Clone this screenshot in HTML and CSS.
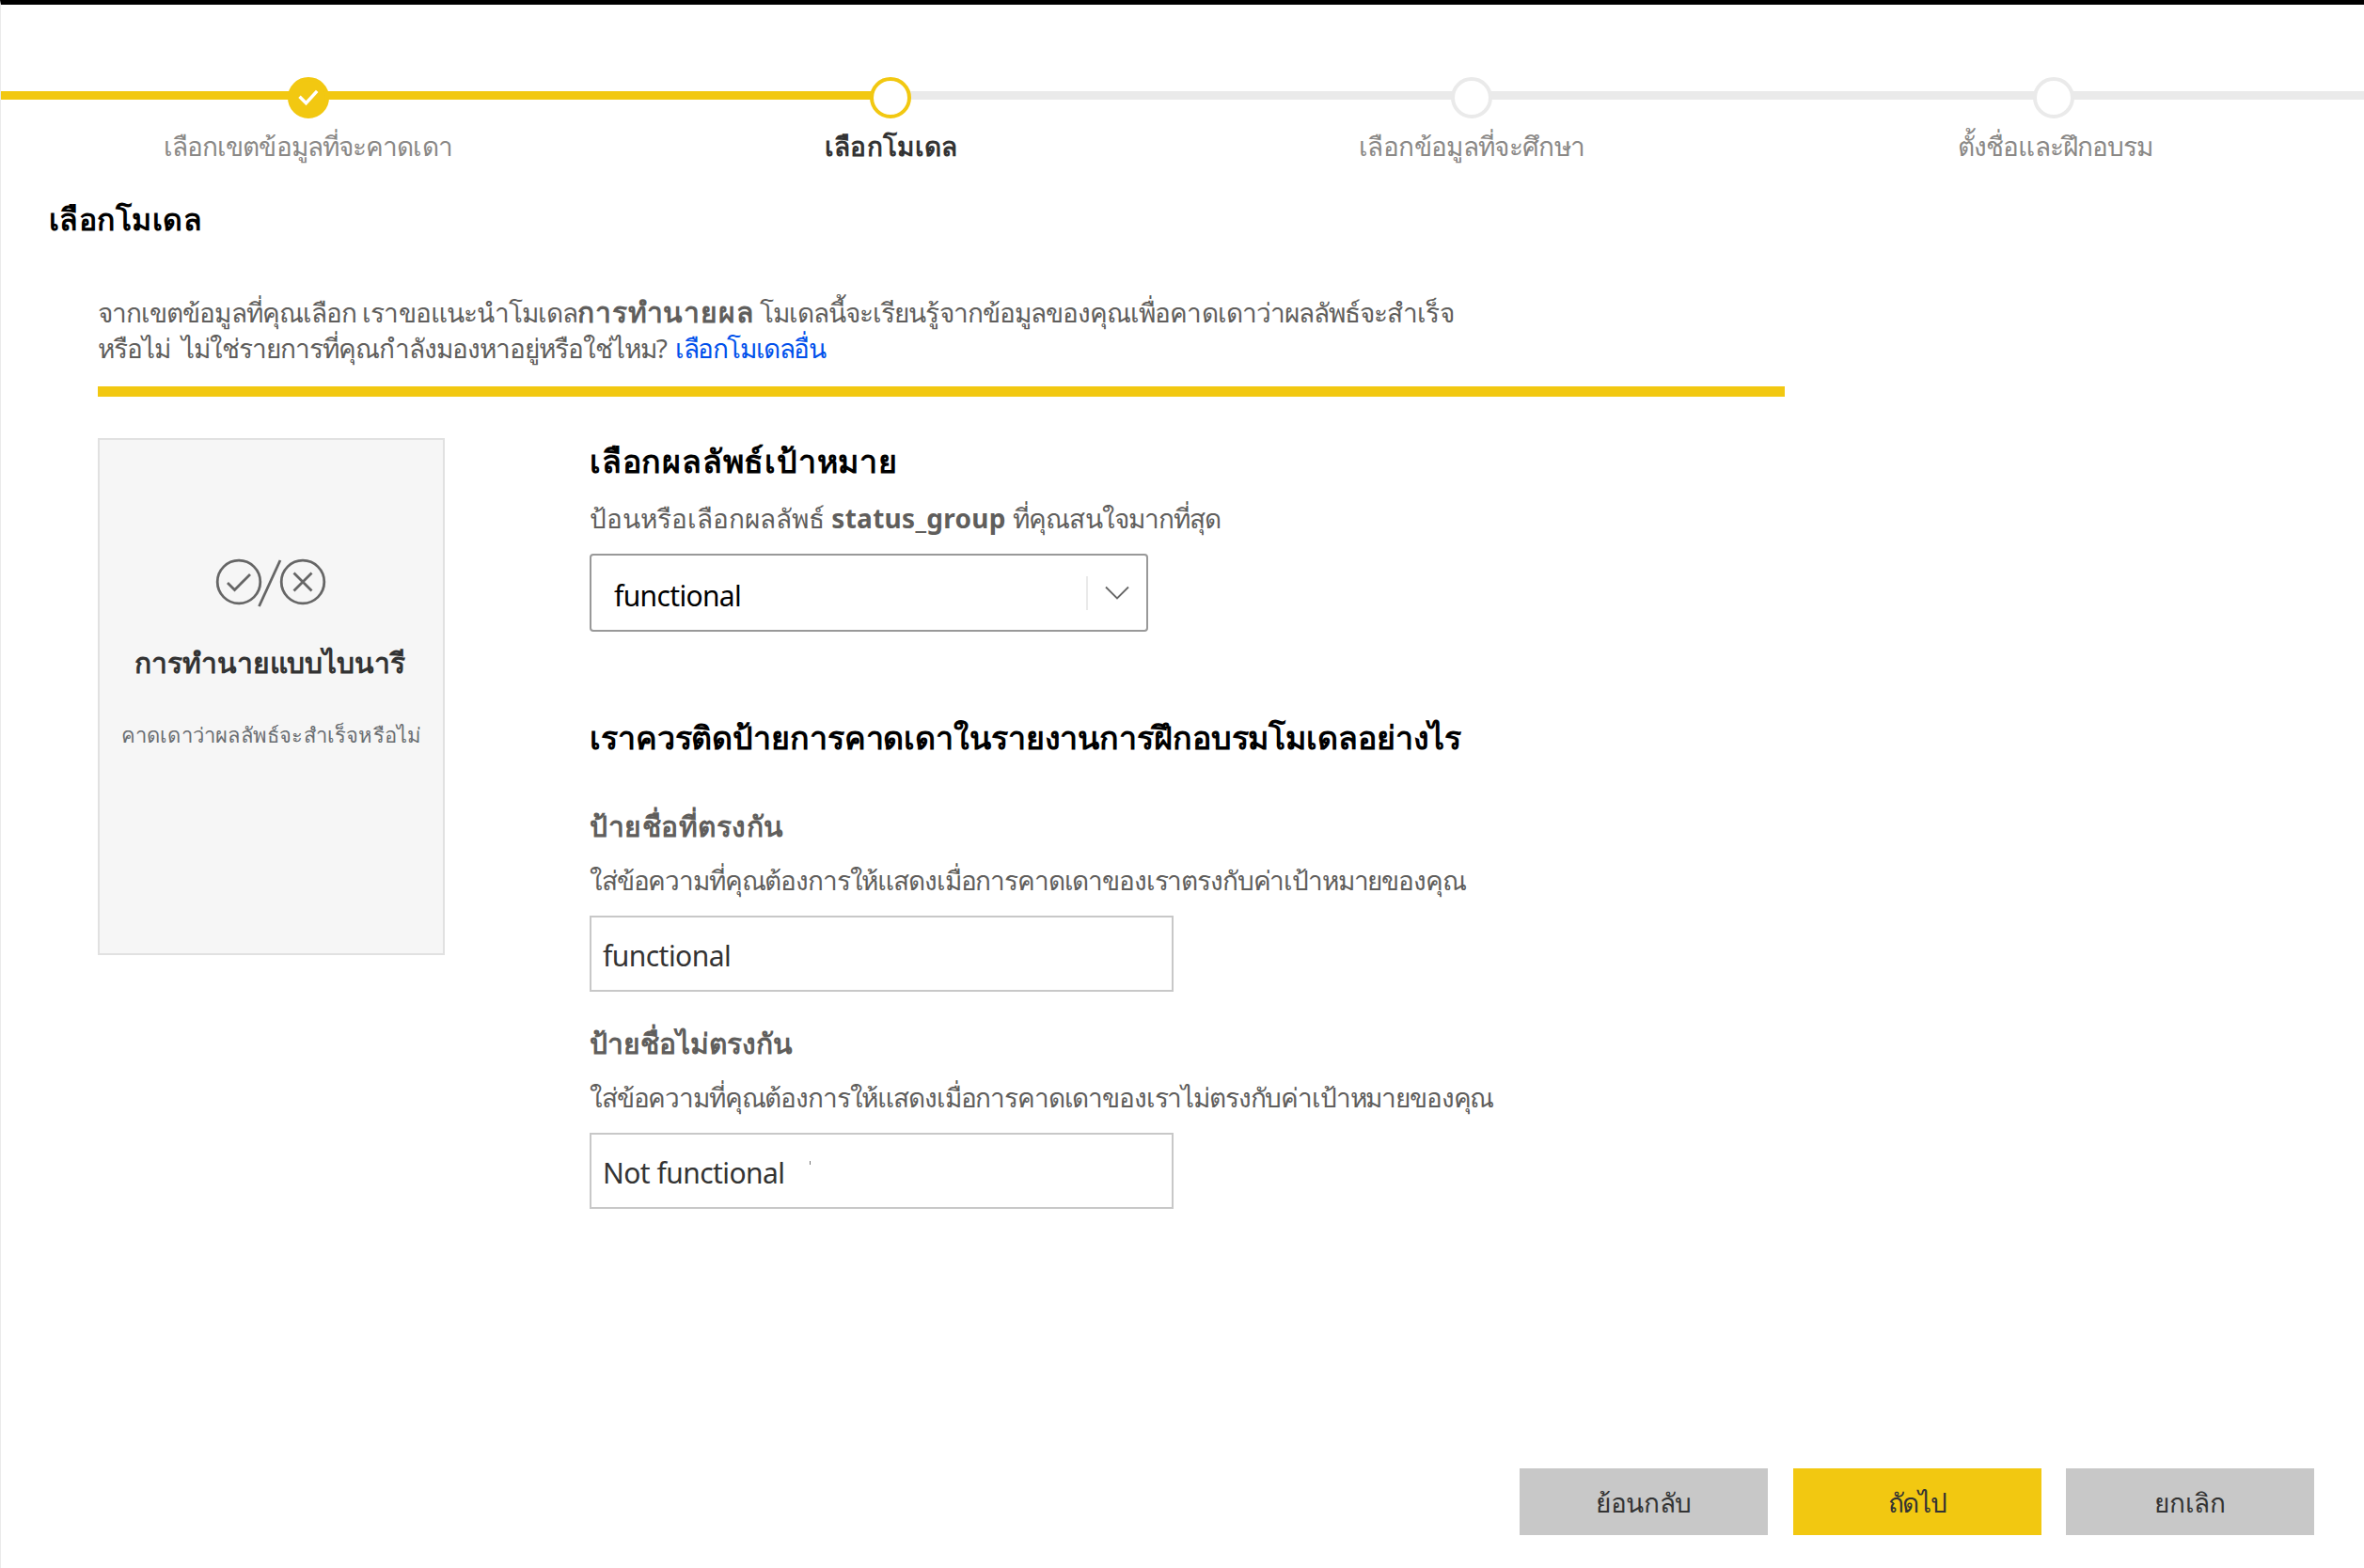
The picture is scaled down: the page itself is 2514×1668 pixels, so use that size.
FILE: index.html
```
<!DOCTYPE html>
<html lang="th">
<head>
<meta charset="utf-8">
<title>เลือกโมเดล</title>
<link rel="stylesheet" href="styles.css">
</head>
<body>
<div class="page">
  <ol class="stepper">
    <li class="step step-done">
      <span class="dot"><svg width="44" height="44" viewBox="0 0 44 44"><path d="M12.5 20.7 L19.5 27.7 L31.2 14.8" fill="none" stroke="#fff" stroke-width="3.4"/></svg></span>
      <span class="step-label tight-2">เลือกเขตข้อมูลที่จะคาดเดา</span>
    </li>
    <li class="step step-current">
      <span class="dot"></span>
      <span class="step-label">เลือกโมเดล</span>
    </li>
    <li class="step">
      <span class="dot"></span>
      <span class="step-label tight-1">เลือกข้อมูลที่จะศึกษา</span>
    </li>
    <li class="step">
      <span class="dot"></span>
      <span class="step-label tight-2 nudge">ตั้งชื่อและฝึกอบรม</span>
    </li>
  </ol>

  <h1 class="title">เลือกโมเดล</h1>

  <p class="intro">จากเขตข้อมูลที่คุณเลือก เราขอแนะนำโมเดล<b>การทำนายผล</b> <span>โมเดลนี้จะเรียนรู้จากข้อมูลของคุณเพื่อคาดเดาว่าผลลัพธ์จะสำเร็จ</span><br><span class="line-2">หรือไม่ &nbsp;ไม่ใช่รายการที่คุณกำลังมองหาอยู่หรือใช่ไหม?</span> <a class="link">เลือกโมเดลอื่น</a></p>

  <main class="content">
    <aside class="card">
      <svg class="card-icon" width="120" height="56" viewBox="0 0 120 56" fill="none" stroke="#666" stroke-width="2.8">
        <circle cx="26" cy="28" r="22.8"/>
        <path d="M14 29 L21.5 36.5 L38 20"/>
        <path d="M47.5 54 L70 5"/>
        <circle cx="94" cy="28" r="22.8"/>
        <path d="M84.5 18.5 L103.5 37.5 M103.5 18.5 L84.5 37.5"/>
      </svg>
      <h2 class="card-title">การทำนายแบบไบนารี</h2>
      <p class="card-text">คาดเดาว่าผลลัพธ์จะสำเร็จหรือไม่</p>
    </aside>

    <section class="form">
      <h2 class="heading heading-1">เลือกผลลัพธ์เป้าหมาย</h2>
      <p class="hint">ป้อนหรือเลือกผลลัพธ์ <b>status_group</b> <span class="tight-2">ที่คุณสนใจมากที่สุด</span></p>
      <div class="select">
        <span>functional</span>
        <i class="divider"></i>
        <svg class="chevron" width="26" height="16" viewBox="0 0 26 16"><path d="M1 1.5 L13 13.5 L25 1.5" fill="none" stroke="#666" stroke-width="1.8"/></svg>
      </div>
      <h2 class="heading heading-2">เราควรติดป้ายการคาดเดาในรายงานการฝึกอบรมโมเดลอย่างไร</h2>
      <h3 class="label">ป้ายชื่อที่ตรงกัน</h3>
      <p class="help">ใส่ข้อความที่คุณต้องการให้แสดงเมื่อการคาดเดาของเราตรงกับค่าเป้าหมายของคุณ</p>
      <div class="input"><span>functional</span></div>
      <h3 class="label label-2">ป้ายชื่อไม่ตรงกัน</h3>
      <p class="help">ใส่ข้อความที่คุณต้องการให้แสดงเมื่อการคาดเดาของเราไม่ตรงกับค่าเป้าหมายของคุณ</p>
      <div class="input"><span>Not functional</span><i class="speck"></i></div>
    </section>
  </main>

  <footer class="actions">
    <div class="btn">ย้อนกลับ</div>
    <div class="btn btn-primary">ถัดไป</div>
    <div class="btn">ยกเลิก</div>
  </footer>
</div>
</body>
</html>
```

FILE: styles.css
```
* { box-sizing: border-box; }
body {
  margin: 0;
  background: #fff;
  font-family: "Noto Sans", "Open Sans", sans-serif;
  color: #605e5c;
}
h1, h2, h3, p, ol { margin: 0; padding: 0; }
.page {
  width: 2514px;
  height: 1668px;
  border-top: 5px solid #000;
  border-left: 1px solid #eaeaea;
  display: flex;
  flex-direction: column;
  overflow: hidden;
  white-space: nowrap;
}

/* Progress stepper */
.stepper {
  list-style: none;
  display: grid;
  grid-template-columns: repeat(4, 618.5px);
  height: 205px;
  padding: 77px 0 0 18px;
  background:
    linear-gradient(#f2c811, #f2c811) 0 92px / 946px 9px no-repeat,
    linear-gradient(#eaeaea, #eaeaea) 0 92px / 100% 9px no-repeat;
}
.step {
  display: flex;
  flex-direction: column;
  align-items: center;
}
.dot {
  width: 44px;
  height: 44px;
  border: 4px solid #eaeaea;
  border-radius: 50%;
  background: #fff;
}
.dot svg { display: block; margin: -4px; }
.step-done .dot { background: #f2c811; border-color: #f2c811; }
.step-current .dot { border-color: #f2c811; }
.step-label {
  margin-top: 9px;
  font-size: 28px;
  line-height: 40px;
  color: #8a8886;
}
.step-current .step-label { color: #333; font-weight: 600; letter-spacing: 0.3px; padding-left: 2px; }
.tight-1 { letter-spacing: -0.65px; }
.tight-2 { letter-spacing: -0.9px; }
.nudge { padding-left: 4px; }
.step-done .step-label { padding-right: 2px; }

.title {
  height: 50px;
  padding-left: 51px;
  font-size: 32px;
  line-height: 46px;
  font-weight: 600;
  letter-spacing: 0.45px;
  color: #000;
}

.intro {
  width: 1794px;
  height: 109px;
  margin: 53px 0 0 103px;
  border-bottom: 11px solid #f2c811;
  font-size: 28px;
  line-height: 38px;
  letter-spacing: -0.94px;
}
.intro b { font-size: 30px; line-height: 30px; letter-spacing: 0.8px; }
.line-2 { letter-spacing: -1.02px; }
.link { color: #0050eb; letter-spacing: -1.45px; margin-left: 3px; }

.content {
  display: flex;
  gap: 154px;
  margin: 44px 0 0 103px;
}

/* Model card */
.card {
  width: 369px;
  height: 550px;
  border: 2px solid #e1e1e1;
  background: #f6f6f6;
  display: flex;
  flex-direction: column;
  align-items: center;
  padding-top: 123px;
}
.card-icon { margin-right: 1px; }
.card-title {
  margin-top: 38px;
  padding-right: 3px;
  font-size: 30px;
  line-height: 40px;
  font-weight: 600;
  letter-spacing: -0.1px;
  color: #333;
}
.card-text {
  margin-top: 38px;
  font-size: 22px;
  line-height: 36px;
  letter-spacing: 0.2px;
  color: #6a6e72;
}

/* Form column */
.heading {
  height: 50px;
  font-size: 34px;
  line-height: 49px;
  font-weight: 600;
  color: #000;
}
.heading-1 { letter-spacing: 0.8px; }
.hint { height: 40px; margin-top: 15px; font-size: 28px; line-height: 40px; }
.hint b { letter-spacing: 0.3px; }
.select {
  width: 594px;
  height: 83px;
  margin-top: 18px;
  border: 2px solid #999;
  border-radius: 4px;
  display: flex;
  align-items: center;
  padding-left: 24px;
  font-size: 30px;
  letter-spacing: -0.65px;
  color: #000;
}
.select span { padding-top: 5px; }
.divider { width: 2px; height: 36px; margin-left: auto; background: #eaeaea; }
.chevron { margin: 0 18px 0 18px; }
.heading-2 { margin-top: 88px; letter-spacing: -0.1px; }
.label {
  height: 40px;
  margin-top: 49px;
  font-size: 30px;
  line-height: 39px;
  font-weight: 600;
  letter-spacing: 0.5px;
}
.label-2 { margin-top: 35px; letter-spacing: 0; }
.help {
  height: 40px;
  margin-top: 18px;
  font-size: 28px;
  line-height: 39px;
  letter-spacing: -1.14px;
}
.input {
  width: 621px;
  height: 81px;
  margin-top: 17px;
  border: 2px solid #c8c8c8;
  display: flex;
  align-items: center;
  padding-left: 12px;
  font-size: 30px;
  letter-spacing: -0.55px;
  color: #333;
}
.input span { padding-top: 3px; }
.speck { width: 1px; height: 4px; margin: -18px 0 0 26px; background: #777; }

/* Footer buttons */
.actions {
  display: flex;
  justify-content: flex-end;
  gap: 26.5px;
  margin-top: auto;
  padding: 0 53px 35px 0;
}
.btn {
  width: 264px;
  height: 71px;
  background: #c8c8c8;
  color: #333;
  font-size: 28px;
  line-height: 73px;
  letter-spacing: -0.3px;
  text-align: center;
}
.btn-primary { background: #f2c811; letter-spacing: -1.4px; }
```
